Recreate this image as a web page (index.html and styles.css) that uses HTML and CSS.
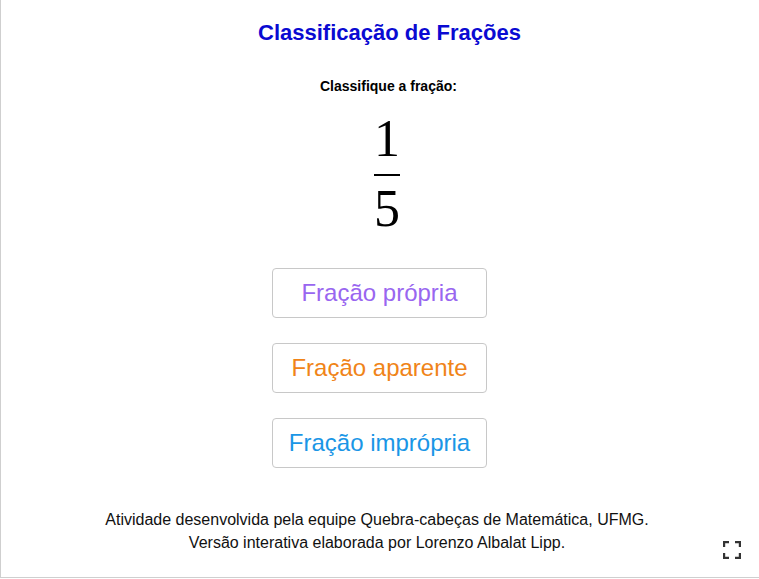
FILE: index.html
```html
<!DOCTYPE html>
<html lang="pt">
<head>
<meta charset="utf-8">
<title>Classificação de Frações</title>
<link rel="stylesheet" href="styles.css">
</head>
<body>
<div class="applet">
  <h1 class="title">Classificação de Frações</h1>
  <p class="prompt">Classifique a fração:</p>
  <div class="fraction">
    <span class="num">1</span>
    <span class="bar"></span>
    <span class="den">5</span>
  </div>
  <div class="options">
    <button class="opt propria">Fração própria</button>
    <button class="opt aparente">Fração aparente</button>
    <button class="opt impropria">Fração imprópria</button>
  </div>
  <div class="credits">
    <p>Atividade desenvolvida pela equipe Quebra-cabeças de Matemática, UFMG.</p>
    <p>Versão interativa elaborada por Lorenzo Albalat Lipp.</p>
  </div>
  <button class="fullscreen" aria-label="Tela cheia">
    <svg width="18" height="18" viewBox="0 0 18 18">
      <path d="M1 6V1h5M12 1h5v5M17 12v5h-5M6 17H1v-5" fill="none" stroke="#333" stroke-width="2.4"/>
    </svg>
  </button>
</div>
</body>
</html>
```
FILE: styles.css
```css
html, body {
  margin: 0;
  padding: 0;
  background: #fff;
}
body {
  font-family: "Liberation Sans", Arial, sans-serif;
  overflow: hidden;
}
.applet {
  position: relative;
  width: 780px;
  height: 577px;
  border-left: 1px solid #cfcfcf;
  border-bottom: 1px solid #cfcfcf;
  display: flex;
  flex-direction: column;
  align-items: flex-start;
}
.title {
  margin: 20px 0 0 257px;
  font-size: 22px;
  line-height: 26px;
  font-weight: bold;
  color: #0a0ad2;
}
.prompt {
  margin: 32px 0 0 319px;
  font-size: 14px;
  line-height: 16px;
  font-weight: bold;
  color: #000;
}
.fraction {
  margin: 19px 0 0 372px;
  width: 28px;
  display: flex;
  flex-direction: column;
  align-items: center;
  font-family: "Liberation Serif", "Times New Roman", serif;
  font-size: 52px;
  line-height: 52px;
  color: #000;
}
.num, .den { display: block; height: 52px; }
.num { height: 52px; }
.bar {
  width: 26px;
  height: 2px;
  background: #000;
  margin: 9px 0 7px;
}
.options {
  margin: 33px 0 0 271px;
  display: flex;
  flex-direction: column;
  gap: 25px;
}
.opt {
  width: 215px;
  height: 50px;
  background: #fff;
  border: 1px solid #c8c8c8;
  border-radius: 4px;
  font-family: "Liberation Sans", Arial, sans-serif;
  font-size: 24px;
  padding: 0;
}
.propria { color: #9966f0; }
.aparente { color: #f08418; }
.impropria { color: #1a96e6; }
.credits {
  margin: 40px 0 0 103px;
  width: 546px;
  text-align: center;
  font-size: 16px;
  line-height: 23px;
  color: #111;
}
.credits p { margin: 0; }
.fullscreen {
  position: absolute;
  left: 722px;
  top: 540px;
  width: 20px;
  height: 20px;
  padding: 0;
  border: 0;
  background: transparent;
}
.fullscreen svg { display: block; }
```
